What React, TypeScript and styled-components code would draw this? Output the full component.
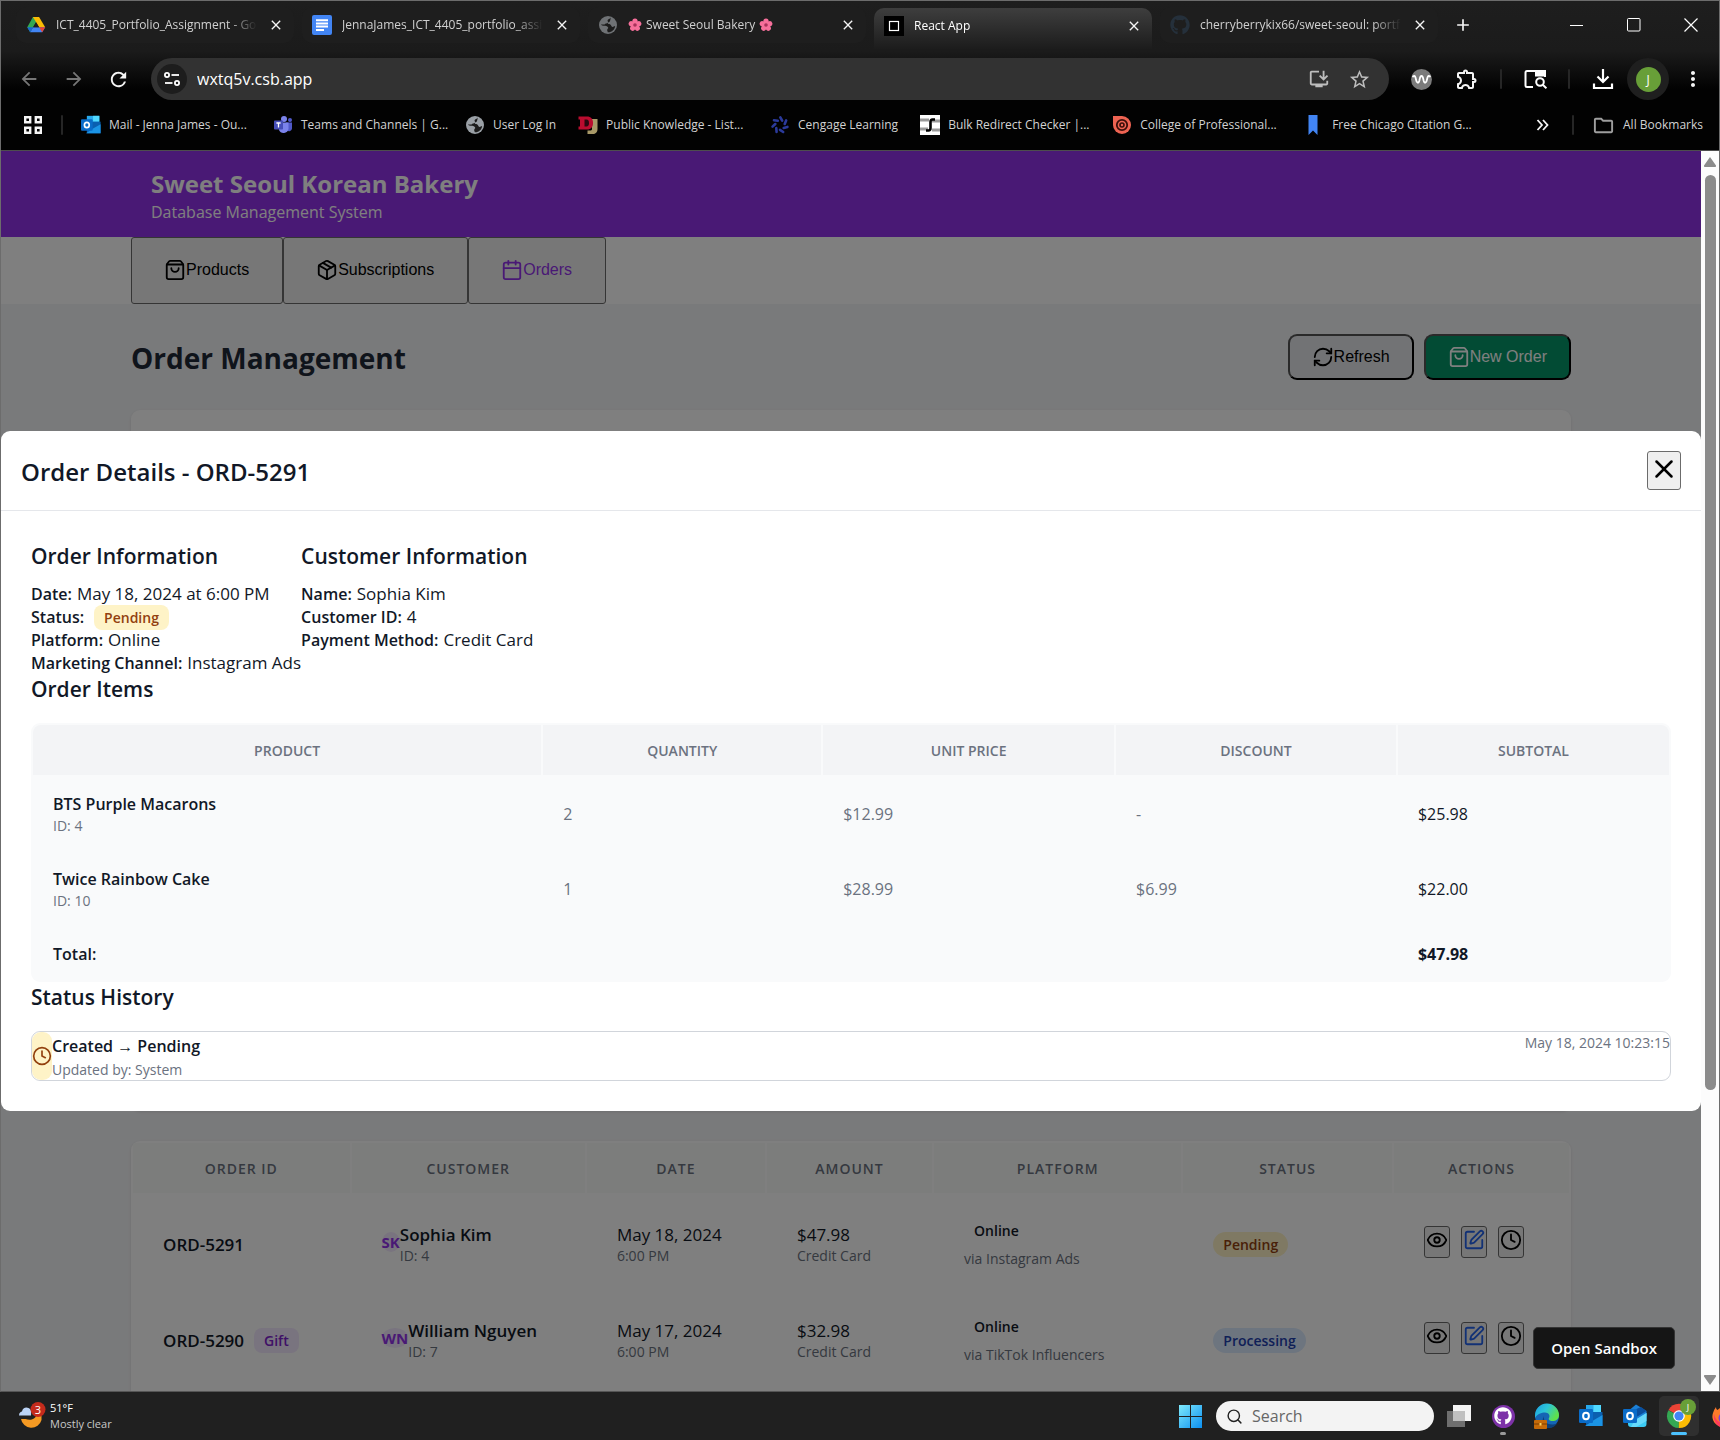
import React from "react";
import styled, { createGlobalStyle, css } from "styled-components";
import { Calendar, Clock, Eye, Package, RefreshCw, ShoppingBag, SquarePen, X, Search } from "lucide-react";
import { FaGithub } from "react-icons/fa";
import {
  MdAdd,
  MdArrowBack,
  MdArrowForward,
  MdClose,
  MdInstallDesktop,
  MdMoreVert,
  MdOutlineExtension,
  MdOutlineFolder,
  MdRefresh,
  MdStarBorder,
} from "react-icons/md";

const sans = `"Segoe UI", "Open Sans", "Noto Sans", sans-serif`;
const arial = `Arial, "Liberation Sans", sans-serif`;

const GlobalStyle = createGlobalStyle`
  *, *::before, *::after { box-sizing: border-box; }
  body { margin: 0; background: #000; font-family: ${sans}; font-size: 16px; color: #111827; }
  button, input { font-family: inherit; font-size: inherit; }
  h1, h2, h3, p { margin: 0; }
  svg { display: block; flex: none; }
`;

const Desktop = styled.div`
  display: flex;
  flex-direction: column;
  height: 100vh;
  overflow: hidden;
`;

const BrowserWindow = styled.div`
  flex: 1;
  min-height: 0;
  display: flex;
  flex-direction: column;
  border: 1px solid #6c6c6c;
  border-bottom-color: #555;
`;

/* ---------- browser chrome ---------- */

const Chrome = styled.header`
  flex: none;
  background: linear-gradient(#1e1e1e, #1b1b1b 50px, #020202 88px);
  border-bottom: 1px solid #4d4d4d;
`;

const TabStrip = styled.div`
  display: flex;
  align-items: center;
  height: 48px;
  padding-left: 15px;
  gap: 8px;
`;

const Tab = styled.div<{ $active?: boolean }>`
  flex: 0 1 278px;
  min-width: 0;
  display: flex;
  align-items: center;
  gap: 10px;
  padding: 0 9px 0 10px;
  height: 36px;
  border-radius: 10px;
  background: #1e1e1e;
  color: #d0d0d0;
  ${(p) =>
    p.$active &&
    css`
      align-self: flex-end;
      height: 41px;
      padding-bottom: 5px;
      border-radius: 10px 10px 0 0;
      background: linear-gradient(#3e3e3e, #1c1c1c);
      color: #fff;
    `}
`;

const TabTitle = styled.button`
  flex: 1;
  min-width: 0;
  display: flex;
  align-items: center;
  gap: 4px;
  padding: 0;
  border: 0;
  background: none;
  color: inherit;
  font-size: 12px;
  line-height: 20px;
  text-align: left;
  white-space: nowrap;
  overflow: hidden;
  mask-image: linear-gradient(90deg, #000 calc(100% - 28px), transparent);
`;

const GlyphButton = styled.button<{ $w?: number; $dim?: boolean }>`
  flex: none;
  display: inline-flex;
  align-items: center;
  justify-content: center;
  width: ${(p) => p.$w ?? 18}px;
  height: 36px;
  padding: 0;
  border: 0;
  background: none;
  color: ${(p) => (p.$dim ? "#767676" : "#f5f5f5")};
`;

const WindowControls = styled.div`
  display: flex;
  margin-left: auto;
`;

const Toolbar = styled.div`
  display: flex;
  align-items: center;
  gap: 2px;
  margin-top: 9px;
  height: 42px;
  padding-right: 4px;
  padding-left: 5px;
`;

const NavButtons = styled.div`
  display: flex;
  margin-right: 8px;
`;

const AddressBar = styled.div`
  flex: 1;
  display: flex;
  align-items: center;
  height: 42px;
  margin-right: 8px;
  padding: 0 10px 0 6px;
  border-radius: 21px;
  background: #323232;
`;

const SiteInfo = styled.button`
  display: flex;
  align-items: center;
  justify-content: center;
  width: 30px;
  height: 30px;
  padding: 0;
  border: 0;
  border-radius: 50%;
  background: #1d1d1d;
  color: #fff;
`;

const AddressInput = styled.input`
  flex: 1;
  min-width: 0;
  padding: 0 10px;
  border: 0;
  outline: 0;
  background: none;
  color: #fff;
  font-size: 16px;
`;

const Divider = styled.span<{ $m?: number }>`
  width: 2px;
  height: 20px;
  margin: 0 ${(p) => p.$m ?? 9}px;
  border-radius: 1px;
  background: #262626;
`;

const AvatarButton = styled.button`
  display: flex;
  align-items: center;
  justify-content: center;
  width: 42px;
  height: 42px;
  padding: 0;
  border: 0;
  border-radius: 50%;
  background: #1f1f1f;
`;

const AvatarDot = styled.span`
  width: 25px;
  height: 25px;
  border-radius: 50%;
  background: #689f38;
  color: #fff;
  font: 12px/25px ${sans};
  text-align: center;
`;

const Bookmarks = styled.nav`
  display: flex;
  align-items: center;
  height: 50px;
  padding: 0 16px 0 22px;
`;

const BookmarkList = styled.div`
  display: flex;
  align-items: center;
  gap: 22px;
`;

const Bookmark = styled.a<{ $capped?: boolean }>`
  display: flex;
  align-items: center;
  gap: 8px;
  width: ${(p) => (p.$capped ? "170px" : "auto")};
  color: #d2d2d2;
  font-size: 12px;
  line-height: 20px;
  text-decoration: none;
  white-space: nowrap;
`;

const BookmarksEnd = styled.div`
  display: flex;
  align-items: center;
  margin-left: auto;
`;

/* ---------- page ---------- */

const Viewport = styled.div`
  flex: 1;
  min-height: 0;
  display: flex;
`;

const Page = styled.div`
  position: relative;
  flex: 1;
  min-width: 0;
  overflow: hidden;
  background: #f3f4f6;
`;

const Container = styled.div<{ $pad?: number }>`
  max-width: 1440px;
  margin: 0 auto;
  padding: 0 ${(p) => p.$pad ?? 0}px;
`;

const Banner = styled.header`
  padding: 16px 0 13px;
  background: #9333ea;
  color: #fff;
`;

const BannerTitle = styled.h1`
  font-size: 24px;
  line-height: 33px;
  font-weight: 700;
`;

const BannerSub = styled.p`
  font-size: 16px;
  line-height: 24px;
`;

const NavBar = styled.nav`
  background: #fff;
`;

const NavRow = styled.div`
  display: flex;
`;

const NavTab = styled.button<{ $active?: boolean }>`
  display: flex;
  align-items: center;
  height: 67px;
  padding: 0 33px 2px 32px;
  border: 1px solid #6b6b6b;
  border-radius: 3px;
  background: #efefef;
  color: ${(p) => (p.$active ? "#9333ea" : "#000")};
  font-family: ${arial};
  font-size: 16px;
`;

const PageHead = styled.div`
  display: flex;
  align-items: center;
  justify-content: space-between;
  padding: 30px 0;
`;

const PageTitle = styled.h2`
  padding-top: 2px;
  font-size: 28px;
  line-height: 38px;
  font-weight: 700;
  color: #1f2937;
`;

const HeadActions = styled.div`
  display: flex;
  gap: 10px;
`;

const ActionButton = styled.button<{ $green?: boolean }>`
  display: flex;
  align-items: center;
  height: 46px;
  padding: 0 22px;
  border: 2px outset #000;
  border-radius: 9px;
  background: ${(p) => (p.$green ? "#059669" : "#e5e7eb")};
  color: ${(p) => (p.$green ? "#fff" : "#000")};
  font-family: ${arial};
  font-size: 16px;
`;

const Card = styled.section`
  border-radius: 9px;
  background: #fff;
  box-shadow: 0 1px 3px rgba(0, 0, 0, 0.1);
  overflow: hidden;
`;

const FilterCard = styled(Card)`
  min-height: 701px;
  margin-bottom: 30px;
`;

const OrdersCard = styled(Card)`
  padding-bottom: 40px;
`;

const DataTable = styled.table`
  width: 100%;
  table-layout: fixed;
  border-spacing: 2px;
  line-height: 23px;
`;

const OrdersHead = styled.th`
  height: 50px;
  padding: 0;
  background: #f9fbf9;
  color: #6b7280;
  font-size: 14px;
  font-weight: 600;
  letter-spacing: 1px;
`;

const OrdersCell = styled.td`
  height: 94px;
  padding: 4px 0 0 30px;
  font-size: 17px;
  white-space: nowrap;
`;

const Strong = styled.div`
  font-weight: 600;
`;

const Small = styled.div<{ $lh?: number }>`
  color: #6b7280;
  font-size: 14px;
  line-height: ${(p) => p.$lh ?? 20}px;
`;

const Customer = styled.div`
  display: flex;
  align-items: center;
`;

const Initials = styled.span`
  margin-bottom: 4px;
  border-radius: 50%;
  background: #f3e8ff;
  color: #9333ea;
  font-size: 15px;
  line-height: 20px;
  font-weight: 700;
`;

const tones = {
  yellow: css`
    background: #fef3c7;
    color: #92400e;
  `,
  blue: css`
    background: #dbeafe;
    color: #1e40af;
  `,
  purple: css`
    background: #f3e8ff;
    color: #7e22ce;
  `,
};

const Pill = styled.span<{ $tone: keyof typeof tones; $square?: boolean }>`
  display: inline-block;
  padding: 0 10px;
  border-radius: ${(p) => (p.$square ? 8 : 13)}px;
  font-size: 14px;
  line-height: 25px;
  font-weight: 600;
  ${(p) => tones[p.$tone]}
`;

const OrderId = styled.div`
  display: flex;
  align-items: center;
  gap: 10px;
  font-weight: 600;
`;

const Channel = styled.div`
  padding-left: 10px;
  font-size: 14px;
  line-height: 30px;
  font-weight: 600;
`;

const RowActions = styled.div`
  display: flex;
  gap: 11px;
  padding-bottom: 4px;
`;

const IconButton = styled.button<{ $blue?: boolean }>`
  height: 32px;
  padding: 2px 1px 6px;
  border: 1px solid #6b6b6b;
  border-radius: 3px;
  background: #efefef;
  color: ${(p) => (p.$blue ? "#2563eb" : "#000")};
`;

/* ---------- dialog ---------- */

const Overlay = styled.div`
  position: absolute;
  inset: 0;
  display: flex;
  align-items: center;
  background: rgba(0, 0, 0, 0.5);
`;

const Dialog = styled.div`
  flex: 1;
  border-radius: 9px;
  background: #fff;
`;

const DialogHead = styled.div`
  display: flex;
  align-items: center;
  justify-content: space-between;
  height: 80px;
  padding: 0 20px;
  border-bottom: 1px solid #e5e7eb;
`;

const DialogTitle = styled.h2`
  padding-top: 2px;
  font-size: 24px;
  line-height: 32px;
  font-weight: 600;
`;

const CloseButton = styled.button`
  height: 39px;
  padding: 2px 1px 7px;
  border: 1px solid #6b6b6b;
  border-radius: 3px;
  background: #efefef;
  color: #000;
`;

const DialogBody = styled.div`
  padding: 30px;
`;

const InfoRow = styled.div`
  display: flex;
`;

const Heading = styled.h3<{ $mb?: number }>`
  margin-bottom: ${(p) => p.$mb ?? 18}px;
  font-size: 21px;
  line-height: 31px;
  font-weight: 600;
`;

const InfoLine = styled.p`
  display: flex;
  align-items: baseline;
  gap: 5px;
  height: 23px;
  font-size: 17px;
  line-height: 23px;
`;

const InfoLabel = styled.b`
  font-size: 16px;
  font-weight: 600;
`;

const InfoPill = styled(Pill)`
  margin-left: 5px;
`;

const ItemsTable = styled(DataTable)`
  border-radius: 9px;
  background: #f9fafb;
`;

const ItemsHead = styled.th`
  height: 50px;
  padding: 0;
  background: #f3f4f6;
  color: #6b7280;
  font-size: 14px;
  font-weight: 600;
  &:first-child {
    border-top-left-radius: 8px;
  }
  &:last-child {
    border-top-right-radius: 8px;
  }
`;

const ItemsCell = styled.td<{ $short?: boolean; $muted?: boolean; $weight?: number }>`
  height: ${(p) => (p.$short ? 53 : 73)}px;
  padding: 2px 20px 0;
  color: ${(p) => (p.$muted ? "#6b7280" : "#111827")};
  font-weight: ${(p) => p.$weight ?? 400};
`;

const History = styled.div`
  display: flex;
  border: 1px solid #d1d5db;
  border-radius: 9px;
`;

const HistoryIcon = styled.div`
  display: flex;
  align-items: center;
  border-radius: 9px;
  background: #fef3c7;
  color: #92400e;
`;

const HistoryText = styled.div`
  flex: 1;
`;

const HistoryTitle = styled.div`
  line-height: 28px;
  font-weight: 600;
`;

const SandboxLink = styled.a`
  position: absolute;
  right: 26px;
  bottom: 22px;
  padding: 0 17px;
  border: 1px solid #343434;
  border-radius: 5px;
  background: #151515;
  color: #fff;
  font-size: 15px;
  line-height: 40px;
  font-weight: 600;
  text-decoration: none;
`;

const ScrollTrack = styled.div`
  flex: none;
  width: 18px;
  display: flex;
  flex-direction: column;
  align-items: center;
  justify-content: space-between;
  padding: 6px 0;
  background: #fcfcfc;
`;

const ScrollLane = styled.div`
  flex: 1;
  width: 11px;
  padding: 8px 0 12px;
`;

const ScrollThumb = styled.div`
  width: 11px;
  height: 77%;
  border-radius: 6px;
  background: #8b8b8b;
`;

/* ---------- taskbar ---------- */

const Taskbar = styled.footer`
  flex: none;
  display: flex;
  align-items: center;
  justify-content: space-between;
  height: 48px;
  padding-left: 18px;
  background: #202020;
  overflow: hidden;
`;

const Weather = styled.button`
  display: flex;
  align-items: center;
  gap: 4px;
  padding: 0;
  border: 0;
  background: none;
  color: #fff;
  font-size: 11px;
  line-height: 16px;
  text-align: left;
`;

const WeatherSub = styled.div`
  color: #c9c9c9;
`;

const TaskItems = styled.div`
  display: flex;
  align-items: center;
`;

const SearchPill = styled.label`
  display: flex;
  align-items: center;
  gap: 9px;
  width: 218px;
  height: 30px;
  margin: 0 3px 0 14px;
  padding: 0 10px;
  border-radius: 15px;
  background: #f3f3f3;
  color: #222;
`;

const SearchInput = styled.input`
  flex: 1;
  min-width: 0;
  padding: 0;
  border: 0;
  outline: 0;
  background: none;
  font-size: 16px;
  &::placeholder {
    color: #666;
    opacity: 1;
  }
`;

const TaskIcon = styled.button<{ $active?: boolean; $dot?: boolean }>`
  position: relative;
  display: flex;
  align-items: center;
  justify-content: center;
  width: 40px;
  height: 40px;
  margin: 0 2px;
  padding: 0;
  border: 0;
  border-radius: 5px;
  background: ${(p) => (p.$active ? "#2f2f2f" : "none")};
  &::after {
    content: "";
    display: ${(p) => (p.$active || p.$dot ? "block" : "none")};
    position: absolute;
    bottom: 1px;
    width: ${(p) => (p.$active ? 16 : 6)}px;
    height: 3px;
    border-radius: 2px;
    background: ${(p) => (p.$active ? "#4cc2ff" : "#9a9a9a")};
  }
`;

const CutIcon = styled.div`
  width: 9px;
  margin-left: 10px;
  overflow: hidden;
`;

/* ---------- drawings ---------- */

const DriveIcon = () => (
  <svg width="20" height="20" viewBox="0 0 24 24">
    <path d="M8.3 2.5h7.4l-3.7 6.2L5 20.7 1.5 14.8z" fill="#34a853" />
    <path d="M8.3 2.5h7.4L23 14.8h-7.2z" fill="#fbbc04" />
    <path d="M8.5 14.8H23l-3.6 6H5z" fill="#4285f4" />
    <path d="M1.5 14.8h7L5 20.8z" fill="#1967d2" />
    <path d="M15.8 14.8H23l-3.6 6z" fill="#ea4335" />
    <path d="M12 8.7l3.6 6.1H8.5z" fill="#1e1e1e" />
  </svg>
);

const DocsIcon = () => (
  <svg width="20" height="20" viewBox="0 0 20 20">
    <rect width="20" height="20" rx="2" fill="#4285f4" />
    <path d="M4 5.2h12M4 8.4h12M4 11.6h12M4 15h8" stroke="#fff" strokeWidth="2" />
  </svg>
);

const GlobeIcon = ({ dim }: { dim?: boolean }) => (
  <svg width="20" height="20" viewBox="0 0 20 20">
    <circle cx="10" cy="10" r="9" fill={dim ? "#6f7275" : "#9aa0a6"} />
    <path
      d="M12.6 2.6c-.6 1.6-2.6 1.4-3 2.6-.3 1.2 1 1.500 .2 2.600-.8 1-2.600.4-3.200 1.700H3c0 0 .3 1.200 2.500 1.200 2.400 0 3.500.2 4.500 1.500.8 1.200-.6 1.400-.8 2.600-.1 1 .4 1.600 .6 2.500 4 .2 7.200-3 7.300-6.300-1.300 0-1.500 1-2.600.9-1.500-.2-1-2-2.500-2.600-1-.4-2-.3-2.200-1.100-.2-1 1.300-1 2-1.800.6-.8.8-2.600 .800-3.800z"
      fill="#1c1c1c"
    />
  </svg>
);

const Blossom = () => (
  <svg width="14" height="14" viewBox="0 0 14 14">
    {[0, 72, 144, 216, 288].map((a) => (
      <ellipse key={a} cx="7" cy="3.600" rx="2.700" ry="3.200" fill="#f76f9b" transform={`rotate(${a} 7 7)`} />
    ))}
    <circle cx="7" cy="7" r="1.800" fill="#a8325a" />
  </svg>
);

const SandboxIcon = () => (
  <svg width="20" height="20" viewBox="0 0 20 20">
    <rect width="20" height="20" fill="#000" />
    <rect x="5.500" y="5.500" width="9" height="9" fill="none" stroke="#fff" strokeWidth="1.200" />
  </svg>
);

const TuneIcon = () => (
  <svg width="16" height="16" viewBox="0 0 16 16" fill="none" stroke="currentColor" strokeWidth="1.800">
    <circle cx="3" cy="4" r="2.100" />
    <path d="M7.500 4H15" />
    <circle cx="13" cy="12" r="2.100" />
    <path d="M1 12h7.500" />
  </svg>
);

const WaveIcon = () => (
  <svg width="21" height="21" viewBox="0 0 21 21">
    <circle cx="10.500" cy="10.500" r="10.500" fill="#7b7b7b" />
    <path
      d="M2 7.500C4 6 4.500 8 5 10.500c.6 3.500 2.500 4.500 3.400 1 .4-2 .6-4.500 2.100-4.500s1.700 2.500 2.100 4.500c.9 3.500 2.800 2.500 3.400-1 .5-2.500 1-4.500 3-3"
      fill="none"
      stroke="#fff"
      strokeWidth="1.800"
      strokeLinecap="round"
    />
  </svg>
);

const TabSearchIcon = () => (
  <svg width="24" height="22" viewBox="0 0 24 22" fill="none" stroke="#fff" strokeWidth="2">
    <path d="M10 19H4a1.500 1.500 0 0 1-1.500-1.500v-13A1.500 1.500 0 0 1 4 3h18v6" />
    <path d="M13 3h9v4.500h-9z" fill="#fff" />
    <circle cx="17" cy="14" r="3.800" />
    <path d="M19.800 16.800l3.600 3.600" />
  </svg>
);

const DownloadIcon = () => (
  <svg width="22" height="22" viewBox="0 0 22 22" fill="none" stroke="#fff" strokeWidth="2.200">
    <path d="M11 1v12.500M5.500 8.500L11 14l5.500-5.500" />
    <path d="M2 15.500V20h18v-4.500" />
  </svg>
);

const AppsIcon = () => (
  <svg width="20" height="20" viewBox="0 0 20 20" fill="none" stroke="#f5f5f5" strokeWidth="2.400">
    <path d="M2.200 2.200h5v5h-5zM12.800 2.200h5v5h-5zM2.200 12.800h5v5h-5zM12.800 12.800h5v5h-5z" />
  </svg>
);

const OutlookIcon = ({ size = 20, fresh }: { size?: number; fresh?: boolean }) => (
  <svg width={size} height={size} viewBox="0 0 24 24">
    {fresh ? (
      <>
        <path d="M4 8l9-7.500L23.500 7v5L12 16H4z" fill="#1b7fd6" />
        <path d="M10 6.500L18 3l5.500 4L12 14z" fill="#0a4f9e" />
        <path d="M5 12l8 4 10.500-7v11a3 3 0 0 1-3 3H8a3 3 0 0 1-3-3z" fill="#3ccbf4" />
        <path d="M12 16l11.500-7v8L13 23H8z" fill="#66d9fb" />
      </>
    ) : (
      <>
        <path d="M7 1h15v8H7z" fill="#28a8ea" />
        <path d="M14.500 1H22v7h-7.500z" fill="#50d9ff" />
        <path d="M7 8h16.500v14H7z" fill="#0a5fb0" />
        <path d="M23.500 11v11H6l9-6z" fill="#1b94e5" />
      </>
    )}
    <rect x="0" y="5" width="14" height="14" rx="1.200" fill="#0a6cc9" />
    <ellipse cx="7" cy="12" rx="2.900" ry="3.200" fill="none" stroke="#fff" strokeWidth="2" />
  </svg>
);

const TeamsIcon = () => (
  <svg width="20" height="20" viewBox="0 0 20 20">
    <circle cx="11" cy="4" r="3" fill="#7b83eb" />
    <circle cx="17" cy="5" r="2" fill="#5059c9" />
    <path d="M13 7.500h6v6a3 3 0 0 1-5 2z" fill="#5059c9" />
    <path d="M6 7.500h9.500V14a5 5 0 0 1-9.500 1z" fill="#7b83eb" />
    <rect x="1" y="5.500" width="9" height="9" rx=".8" fill="#464eb8" />
    <path d="M3.400 8h4.200M5.500 8v4.600" stroke="#fff" strokeWidth="1.300" />
  </svg>
);

const DenverIcon = () => (
  <svg width="20" height="20" viewBox="0 0 20 20">
    <path d="M14 4h5.500v10c0 3.500-2 5-4.500 5H9.500v-3.500H12c1 0 2-.5 2-1.500z" fill="#a89968" />
    <path d="M.5 1.500H9c4 0 6 2.500 6 6.500s-2 6.500-6 6.500H.5v-3H2v-7H.5z" fill="#ba0c2f" />
    <path d="M6.500 4.500H8.500c1.800 0 2.500 1.200 2.500 3.500s-.7 3.500-2.500 3.500h-2z" fill="#2a0810" />
  </svg>
);

const CengageIcon = () => (
  <svg width="20" height="20" viewBox="0 0 20 20" stroke="#2b3a9b" strokeWidth="2.600" strokeLinecap="round">
    {[10, 61, 112, 163, 214, 265, 316].map((a) => (
      <path key={a} d="M9 2.400l2.400 3" transform={`rotate(${a} 10 10)`} />
    ))}
  </svg>
);

const BulkIcon = () => (
  <svg width="20" height="20" viewBox="0 0 20 20">
    <rect width="20" height="20" fill="#fff" />
    <path d="M0 5h9M0 14h8M12 6h8M12 15h8" stroke="#9a9a9a" strokeWidth="3" />
    <path d="M15 4.500h-2.500c-1.800 0-2 1.500-2 2.500v6c0 1.500-.5 2.500-2 2.500H6" fill="none" stroke="#000" strokeWidth="2.600" />
  </svg>
);

const CollegeIcon = () => (
  <svg width="20" height="20" viewBox="0 0 20 20" fill="none">
    <path d="M1 1h9a9 9 0 1 1-9 9z" fill="#ee6352" />
    <circle cx="10" cy="10" r="5.200" stroke="#3a0f0b" strokeWidth="1.800" />
    <circle cx="10" cy="10" r="2" stroke="#3a0f0b" strokeWidth="1.600" />
  </svg>
);

const RibbonIcon = () => (
  <svg width="20" height="20" viewBox="0 0 20 20">
    <path d="M4.500 0h9v20L9 15.500 4.500 20z" fill="#4285f4" />
  </svg>
);

const WeatherIcon = () => (
  <svg width="28" height="30" viewBox="0 0 28 30">
    <path d="M3 18a10.500 10.500 0 0 0 20.500 1V15l-5-1c-1 4-6 6-11 4z" fill="#f59a23" />
    <path d="M1 14.500c0-3 2-4 3-4C4.500 7 8 5.500 10.500 7c2.500 1 3 3 2.500 7.500z" fill="#bcd4f6" />
    <circle cx="20" cy="8.500" r="7.500" fill="#c42b1c" />
    <text x="20" y="12.500" fill="#fff" fontSize="11" textAnchor="middle">3</text>
  </svg>
);

const WindowsIcon = () => (
  <svg width="23" height="23" viewBox="0 0 23 23">
    <defs>
      <linearGradient id="win" x1="0" y1="0" x2="1" y2="1">
        <stop offset="0" stopColor="#7feafc" />
        <stop offset="1" stopColor="#0c8ff0" />
      </linearGradient>
    </defs>
    <path d="M0 0h11v11H0zM12 0h11v11H12zM0 12h11v11H0zM12 12h11v11H12z" fill="url(#win)" />
  </svg>
);

const TaskViewIcon = () => (
  <svg width="24" height="22" viewBox="0 0 24 22">
    <rect x="6" y="0" width="18" height="16" fill="#f4f4f4" />
    <rect x="0" y="6" width="18" height="16" fill="#6f6f6f" />
    <rect x="6" y="6" width="12" height="10" fill="#c0c0c0" />
  </svg>
);

const GithubRound = styled.span`
  display: flex;
  align-items: center;
  justify-content: center;
  width: 23px;
  height: 23px;
  border-radius: 50%;
  background: #7d32a8;
  color: #fff;
`;

const EdgeIcon = () => (
  <svg width="26" height="26" viewBox="0 0 26 26">
    <defs>
      <linearGradient id="edge" x1="0" y1="0" x2="1" y2=".5">
        <stop offset="0" stopColor="#1b9de2" />
        <stop offset=".5" stopColor="#2cc5d8" />
        <stop offset="1" stopColor="#5fe04a" />
      </linearGradient>
    </defs>
    <circle cx="13" cy="13" r="12" fill="#1565b4" />
    <path d="M1 13a12 12 0 0 1 24-1c0 4-3 6-6.500 6-3 0-4.500-1.500-3.500-3 1.500-2.500-.5-5.500-4-5.500S3 11 1 15z" fill="url(#edge)" />
    <path d="M10 13c-1 4 2 9 9 8.500 2 0 3.500-.8 4.500-1.500-2 3-5 5-9 5-5 0-8-5-4.500-12z" fill="#0d3f78" />
    <rect x="0" y="17" width="13" height="9" rx="1" fill="#c56a08" />
    <path d="M0 21h13" stroke="#7a3c00" strokeWidth="1" />
    <rect x="5.500" y="20" width="2" height="2.500" fill="#ffd35a" />
  </svg>
);

const ChromeIcon = () => (
  <svg width="34" height="34" viewBox="-4.500 .5 34 34">
    <path d="M12.500 17.500L2 11.500A12 12 0 0 1 23 11.500z" fill="#ea4335" />
    <path d="M12.500 17.500L1.900 11.800A12 12 0 0 0 12.300 29.500z" fill="#34a853" />
    <path d="M12.500 17.500L23 11.500A12 12 0 0 1 12.300 29.500z" fill="#fbbc04" />
    <circle cx="12.500" cy="17.500" r="5.800" fill="#fff" />
    <circle cx="12.500" cy="17.500" r="4.600" fill="#4285f4" />
    <circle cx="21.500" cy="8.500" r="8" fill="#689f38" />
    <text x="21.500" y="12" fill="#fff" fontSize="9" textAnchor="middle">J</text>
  </svg>
);

const FirefoxIcon = () => (
  <svg width="24" height="24" viewBox="0 0 24 24">
    <path d="M12 23A10.500 10.500 0 0 1 2 9c.5-2 1.500-4 3-6 0 1.500.5 2.500 1.500 3L9 4l2 3 8-1 4 9-4 7z" fill="#ff7a2a" />
    <circle cx="13" cy="14" r="5.500" fill="#7b3fe0" />
    <path d="M3 10c2 8 7 9 10 8l-3 5c-4-1-8-6-7-13z" fill="#ff3b5c" />
  </svg>
);

/* ---------- data ---------- */

const bookmarks: [React.ReactNode, string][] = [
  [<OutlookIcon />, "Mail - Jenna James - Ou..."],
  [<TeamsIcon />, "Teams and Channels | G..."],
  [<GlobeIcon />, "User Log In"],
  [<DenverIcon />, "Public Knowledge - List..."],
  [<CengageIcon />, "Cengage Learning"],
  [<BulkIcon />, "Bulk Redirect Checker |..."],
  [<CollegeIcon />, "College of Professional..."],
  [<RibbonIcon />, "Free Chicago Citation G..."],
];

const orderColumns: [string, number][] = [
  ["ORDER ID", 219],
  ["CUSTOMER", 236],
  ["DATE", 180],
  ["AMOUNT", 167],
  ["PLATFORM", 250],
  ["STATUS", 211],
  ["ACTIONS", 177],
];

const orders = [
  {
    id: "ORD-5291",
    gift: false,
    initials: "SK",
    name: "Sophia Kim",
    customer: "ID: 4",
    date: "May 18, 2024",
    amount: "$47.98",
    via: "via Instagram Ads",
    status: "Pending",
    tone: "yellow" as const,
  },
  {
    id: "ORD-5290",
    gift: true,
    initials: "WN",
    name: "William Nguyen",
    customer: "ID: 7",
    date: "May 17, 2024",
    amount: "$32.98",
    via: "via TikTok Influencers",
    status: "Processing",
    tone: "blue" as const,
  },
];

const itemColumns: [string, number][] = [
  ["PRODUCT", 512],
  ["QUANTITY", 280],
  ["UNIT PRICE", 293],
  ["DISCOUNT", 282],
  ["SUBTOTAL", 273],
];

const items = [
  ["BTS Purple Macarons", "ID: 4", "2", "$12.99", "-", "$25.98"],
  ["Twice Rainbow Cake", "ID: 10", "1", "$28.99", "$6.99", "$22.00"],
];

const Col = styled.col<{ $share: number }>`
  width: ${(p) => p.$share}%;
`;

const Columns = ({ cols }: { cols: [string, number][] }) => {
  const total = cols.reduce((s, c) => s + c[1], 0);
  return (
    <colgroup>
      {cols.map(([name, w]) => (
        <Col key={name} $share={(w / total) * 100} />
      ))}
    </colgroup>
  );
};

const BrowserTab = ({ icon, children, active }: { icon: React.ReactNode; children: React.ReactNode; active?: boolean }) => (
  <Tab $active={active}>
    {icon}
    <TabTitle>{children}</TabTitle>
    <GlyphButton aria-label="Close tab">
      <MdClose size={16} />
    </GlyphButton>
  </Tab>
);

export default function App() {
  return (
    <Desktop>
      <GlobalStyle />
      <BrowserWindow>
        <Chrome>
          <TabStrip>
            <BrowserTab icon={<DriveIcon />}>ICT_4405_Portfolio_Assignment - Go</BrowserTab>
            <BrowserTab icon={<DocsIcon />}>JennaJames_ICT_4405_portfolio_assi</BrowserTab>
            <BrowserTab icon={<GlobeIcon dim />}>
              <Blossom /> Sweet Seoul Bakery <Blossom />
            </BrowserTab>
            <BrowserTab icon={<SandboxIcon />} active>
              React App
            </BrowserTab>
            <BrowserTab icon={<FaGithub size={20} color="#25303b" />}>cherryberrykix66/sweet-seoul: portf</BrowserTab>
            <GlyphButton $w={34} aria-label="New tab">
              <MdAdd size={20} />
            </GlyphButton>
            <WindowControls>
              <GlyphButton $w={57} aria-label="Minimize">
                <svg width="13" height="13" stroke="#fff">
                  <path d="M0 6.500h13" />
                </svg>
              </GlyphButton>
              <GlyphButton $w={57} aria-label="Maximize">
                <svg width="14" height="14" fill="none" stroke="#fff">
                  <rect x=".5" y=".5" width="12.500" height="12.500" rx="1" />
                </svg>
              </GlyphButton>
              <GlyphButton $w={57} aria-label="Close window">
                <svg width="14" height="14" stroke="#fff" strokeWidth="1.200">
                  <path d="M.5 .5l13 13M13.500 .5l-13 13" />
                </svg>
              </GlyphButton>
            </WindowControls>
          </TabStrip>
          <Toolbar>
            <NavButtons>
              <GlyphButton $w={45} $dim aria-label="Back">
                <MdArrowBack size={22} />
              </GlyphButton>
              <GlyphButton $w={45} $dim aria-label="Forward">
                <MdArrowForward size={22} />
              </GlyphButton>
              <GlyphButton $w={45} aria-label="Reload">
                <MdRefresh size={23} />
              </GlyphButton>
            </NavButtons>
            <AddressBar>
              <SiteInfo aria-label="Site information">
                <TuneIcon />
              </SiteInfo>
              <AddressInput aria-label="Address" defaultValue="wxtq5v.csb.app" />
              <GlyphButton $w={40} aria-label="Install app">
                <MdInstallDesktop size={22} color="#bdbdbd" />
              </GlyphButton>
              <GlyphButton $w={40} aria-label="Bookmark this page">
                <MdStarBorder size={23} color="#bdbdbd" />
              </GlyphButton>
            </AddressBar>
            <GlyphButton $w={44} aria-label="Wave extension">
              <WaveIcon />
            </GlyphButton>
            <GlyphButton $w={44} aria-label="Extensions">
              <MdOutlineExtension size={24} />
            </GlyphButton>
            <Divider />
            <GlyphButton $w={44} aria-label="Search tabs">
              <TabSearchIcon />
            </GlyphButton>
            <Divider />
            <GlyphButton $w={44} aria-label="Downloads">
              <DownloadIcon />
            </GlyphButton>
            <AvatarButton aria-label="Profile">
              <AvatarDot>J</AvatarDot>
            </AvatarButton>
            <GlyphButton $w={44} aria-label="Menu">
              <MdMoreVert size={24} />
            </GlyphButton>
          </Toolbar>
          <Bookmarks aria-label="Bookmarks">
            <AppsIcon />
            <Divider $m={18} />
            <BookmarkList>
              {bookmarks.map(([icon, label]) => (
                <Bookmark key={label} href="#" $capped={label.endsWith("...")}>
                  {icon}
                  {label}
                </Bookmark>
              ))}
            </BookmarkList>
            <BookmarksEnd>
              <GlyphButton $w={24} aria-label="More bookmarks">
                <svg width="13" height="12" fill="none" stroke="currentColor" strokeWidth="1.800">
                  <path d="M1.500 1l4.500 5-4.500 5M7 1l4.500 5L7 11" />
                </svg>
              </GlyphButton>
              <Divider $m={18} />
              <Bookmark href="#">
                <MdOutlineFolder size={23} color="#9e9e9e" />
                All Bookmarks
              </Bookmark>
            </BookmarksEnd>
          </Bookmarks>
        </Chrome>

        <Viewport>
          <Page>
            <Banner>
              <Container $pad={20}>
                <BannerTitle>Sweet Seoul Korean Bakery</BannerTitle>
                <BannerSub>Database Management System</BannerSub>
              </Container>
            </Banner>
            <NavBar>
              <Container>
                <NavRow>
                  <NavTab>
                    <ShoppingBag size={22} />
                    Products
                  </NavTab>
                  <NavTab>
                    <Package size={22} />
                    Subscriptions
                  </NavTab>
                  <NavTab $active>
                    <Calendar size={22} />
                    Orders
                  </NavTab>
                </NavRow>
              </Container>
            </NavBar>
            <Container as="main">
              <PageHead>
                <PageTitle>Order Management</PageTitle>
                <HeadActions>
                  <ActionButton>
                    <RefreshCw size={22} />
                    Refresh
                  </ActionButton>
                  <ActionButton $green>
                    <ShoppingBag size={22} />
                    New Order
                  </ActionButton>
                </HeadActions>
              </PageHead>
              <FilterCard />
              <OrdersCard>
                <DataTable>
                  <Columns cols={orderColumns} />
                  <thead>
                    <tr>
                      {orderColumns.map(([name]) => (
                        <OrdersHead key={name}>{name}</OrdersHead>
                      ))}
                    </tr>
                  </thead>
                  <tbody>
                    {orders.map((o) => (
                      <tr key={o.id}>
                        <OrdersCell>
                          <OrderId>
                            {o.id}
                            {o.gift && (
                              <Pill $tone="purple" $square>
                                Gift
                              </Pill>
                            )}
                          </OrderId>
                        </OrdersCell>
                        <OrdersCell>
                          <Customer>
                            <Initials>{o.initials}</Initials>
                            <div>
                              <Strong>{o.name}</Strong>
                              <Small>{o.customer}</Small>
                            </div>
                          </Customer>
                        </OrdersCell>
                        <OrdersCell>
                          <div>{o.date}</div>
                          <Small>6:00 PM</Small>
                        </OrdersCell>
                        <OrdersCell>
                          <div>{o.amount}</div>
                          <Small>Credit Card</Small>
                        </OrdersCell>
                        <OrdersCell>
                          <Channel>Online</Channel>
                          <Small $lh={26}>{o.via}</Small>
                        </OrdersCell>
                        <OrdersCell>
                          <Pill $tone={o.tone}>{o.status}</Pill>
                        </OrdersCell>
                        <OrdersCell>
                          <RowActions>
                            <IconButton aria-label="View order">
                              <Eye size={22} />
                            </IconButton>
                            <IconButton $blue aria-label="Edit order">
                              <SquarePen size={22} />
                            </IconButton>
                            <IconButton aria-label="Order history">
                              <Clock size={22} />
                            </IconButton>
                          </RowActions>
                        </OrdersCell>
                      </tr>
                    ))}
                  </tbody>
                </DataTable>
              </OrdersCard>
            </Container>

            <Overlay>
              <Dialog role="dialog" aria-label="Order Details">
                <DialogHead>
                  <DialogTitle>Order Details - ORD-5291</DialogTitle>
                  <CloseButton aria-label="Close">
                    <X size={30} />
                  </CloseButton>
                </DialogHead>
                <DialogBody>
                  <InfoRow>
                    <div>
                      <Heading $mb={10}>Order Information</Heading>
                      <InfoLine>
                        <InfoLabel>Date:</InfoLabel> May 18, 2024 at 6:00 PM
                      </InfoLine>
                      <InfoLine>
                        <InfoLabel>Status:</InfoLabel>
                        <InfoPill $tone="yellow" $square>
                          Pending
                        </InfoPill>
                      </InfoLine>
                      <InfoLine>
                        <InfoLabel>Platform:</InfoLabel> Online
                      </InfoLine>
                      <InfoLine>
                        <InfoLabel>Marketing Channel:</InfoLabel> Instagram Ads
                      </InfoLine>
                    </div>
                    <div>
                      <Heading $mb={10}>Customer Information</Heading>
                      <InfoLine>
                        <InfoLabel>Name:</InfoLabel> Sophia Kim
                      </InfoLine>
                      <InfoLine>
                        <InfoLabel>Customer ID:</InfoLabel> 4
                      </InfoLine>
                      <InfoLine>
                        <InfoLabel>Payment Method:</InfoLabel> Credit Card
                      </InfoLine>
                    </div>
                  </InfoRow>
                  <Heading>Order Items</Heading>
                  <ItemsTable>
                    <Columns cols={itemColumns} />
                    <thead>
                      <tr>
                        {itemColumns.map(([name]) => (
                          <ItemsHead key={name}>{name}</ItemsHead>
                        ))}
                      </tr>
                    </thead>
                    <tbody>
                      {items.map(([name, id, qty, price, discount, subtotal]) => (
                        <tr key={name}>
                          <ItemsCell>
                            <Strong>{name}</Strong>
                            <Small>{id}</Small>
                          </ItemsCell>
                          <ItemsCell $muted>{qty}</ItemsCell>
                          <ItemsCell $muted>{price}</ItemsCell>
                          <ItemsCell $muted>{discount}</ItemsCell>
                          <ItemsCell>{subtotal}</ItemsCell>
                        </tr>
                      ))}
                    </tbody>
                    <tfoot>
                      <tr>
                        <ItemsCell $short $weight={600} colSpan={4}>
                          Total:
                        </ItemsCell>
                        <ItemsCell $short $weight={700}>
                          $47.98
                        </ItemsCell>
                      </tr>
                    </tfoot>
                  </ItemsTable>
                  <Heading>Status History</Heading>
                  <History>
                    <HistoryIcon>
                      <Clock size={20} />
                    </HistoryIcon>
                    <HistoryText>
                      <HistoryTitle>Created → Pending</HistoryTitle>
                      <Small>Updated by: System</Small>
                    </HistoryText>
                    <Small $lh={22}>May 18, 2024 10:23:15</Small>
                  </History>
                </DialogBody>
              </Dialog>
            </Overlay>
            <SandboxLink href="#">Open Sandbox</SandboxLink>
          </Page>
          <ScrollTrack aria-hidden="true">
            <svg width="12" height="10">
              <path d="M6 0l6 8.500a1 1 0 0 1-1 1.500H1a1 1 0 0 1-1-1.500z" fill="#8b8b8b" />
            </svg>
            <ScrollLane>
              <ScrollThumb />
            </ScrollLane>
            <svg width="12" height="10">
              <path d="M6 10L0 1.500A1 1 0 0 1 1 0h10a1 1 0 0 1 1 1.500z" fill="#8b8b8b" />
            </svg>
          </ScrollTrack>
        </Viewport>
      </BrowserWindow>

      <Taskbar>
        <Weather>
          <WeatherIcon />
          <div>
            51°F
            <WeatherSub>Mostly clear</WeatherSub>
          </div>
        </Weather>
        <TaskItems>
          <WindowsIcon />
          <SearchPill>
            <Search size={17} />
            <SearchInput placeholder="Search" aria-label="Search" />
          </SearchPill>
          <TaskIcon aria-label="Task view">
            <TaskViewIcon />
          </TaskIcon>
          <TaskIcon $dot aria-label="GitHub Desktop">
            <GithubRound>
              <FaGithub size={18} />
            </GithubRound>
          </TaskIcon>
          <TaskIcon aria-label="Edge">
            <EdgeIcon />
          </TaskIcon>
          <TaskIcon aria-label="Outlook classic">
            <OutlookIcon size={24} />
          </TaskIcon>
          <TaskIcon aria-label="Outlook">
            <OutlookIcon size={24} fresh />
          </TaskIcon>
          <TaskIcon $active aria-label="Chrome">
            <ChromeIcon />
          </TaskIcon>
          <CutIcon>
            <FirefoxIcon />
          </CutIcon>
        </TaskItems>
      </Taskbar>
    </Desktop>
  );
}
